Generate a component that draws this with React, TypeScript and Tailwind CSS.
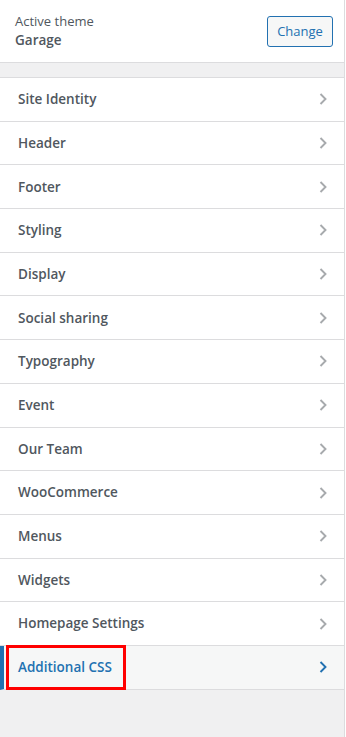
import React from "react";

const items = [
  "Site Identity",
  "Header",
  "Footer",
  "Styling",
  "Display",
  "Social sharing",
  "Typography",
  "Event",
  "Our Team",
  "WooCommerce",
  "Menus",
  "Widgets",
  "Homepage Settings",
];

function Chevron({ color }: { color: string }) {
  return (
    <svg width="10" height="14" viewBox="0 0 10 14" fill="none">
      <path d="M2.5 2 L7.5 7 L2.5 12" stroke={color} strokeWidth="1.9" fill="none" />
    </svg>
  );
}

export default function App() {
  return (
    <div
      className="w-[346px] h-[737px] bg-white"
      style={{ fontFamily: '"Open Sans", "Noto Sans", sans-serif' }}
    >
      <div className="w-[345px] h-[737px] bg-[#f0f0f1] border-r border-[#dcdcde] flex flex-col">
        <div className="h-[63px] bg-white border-b border-[#dcdcde] flex items-center justify-between pl-[15px] pr-[11px]">
          <div className="flex flex-col">
            <span className="text-[13px] leading-[18px] text-[#50575e]">Active theme</span>
            <span className="text-[13.5px] leading-[20px] font-semibold text-[#50575e]">Garage</span>
          </div>
          <button className="h-[31px] w-[66px] rounded-[3px] border border-[#2271b1] bg-[#f6f7f7] text-[#2271b1] text-[13px] leading-[18px]">
            Change
          </button>
        </div>
        <div className="h-[14px]" />
        <div className="flex flex-col border-t border-[#dcdcde]">
          {items.map((t) => (
            <div
              key={t}
              className="h-[43.7px] bg-white border-b border-[#dcdcde] flex items-center justify-between pl-[18px] pr-[16px]"
            >
              <span className="text-[13.5px] font-semibold text-[#50575e]">{t}</span>
              <Chevron color="#a7aaad" />
            </div>
          ))}
          <div className="h-[43.7px] bg-[#f6f7f7] border-b border-[#dcdcde] flex items-center justify-between pr-[16px] border-l-4 border-l-[#2271b1]">
            <div className="ml-[2px] h-[45px] w-[120px] border-[3px] border-[#ff0000] flex items-center pl-[9px]">
              <span className="text-[13.5px] font-semibold text-[#2271b1]">Additional CSS</span>
            </div>
            <Chevron color="#2271b1" />
          </div>
        </div>
      </div>
    </div>
  );
}
